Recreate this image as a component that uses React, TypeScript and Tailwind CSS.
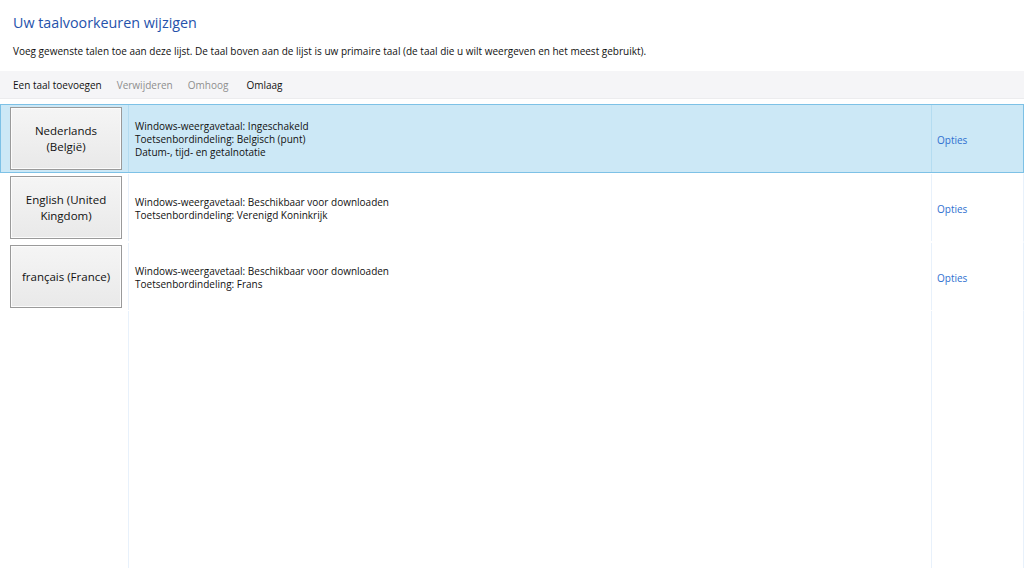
import React from "react";

const font = { fontFamily: '"Open Sans", "Noto Sans", sans-serif' };

type Lang = { name: string[]; lines: string[]; selected?: boolean };

const langs: Lang[] = [
  {
    name: ["Nederlands", "(België)"],
    lines: [
      "Windows-weergavetaal: Ingeschakeld",
      "Toetsenbordindeling: Belgisch (punt)",
      "Datum-, tijd- en getalnotatie",
    ],
    selected: true,
  },
  {
    name: ["English (United", "Kingdom)"],
    lines: [
      "Windows-weergavetaal: Beschikbaar voor downloaden",
      "Toetsenbordindeling: Verenigd Koninkrijk",
    ],
  },
  {
    name: ["français (France)"],
    lines: [
      "Windows-weergavetaal: Beschikbaar voor downloaden",
      "Toetsenbordindeling: Frans",
    ],
  },
];

function Row({ lang }: { lang: Lang }) {
  const sel = lang.selected;
  return (
    <div
      className={`flex h-[69px] border ${
        sel
          ? "bg-[#cce8f6] border-[#7dc1e6]"
          : "bg-white border-transparent border-r-[#e8f1fb]"
      }`}
    >
      <div className="w-[127px] shrink-0 pl-[9px] pt-[2px]">
        <div className="w-[112px] h-[63px] pt-[1px] border border-[#9a9a9a] bg-gradient-to-b from-[#f5f5f5] to-[#e9e9e9] flex flex-col items-center justify-center text-[11.5px] leading-[16px] text-[#111] shadow-[inset_0_0_0_1px_#fcfcfc]">
          {lang.name.map((n) => (
            <span key={n}>{n}</span>
          ))}
        </div>
      </div>
      <div
        className={`w-px shrink-0 ${sel ? "bg-[#b4dcf1]" : "bg-[#e8f1fb]"}`}
      />
      <div className="flex-1 pl-[6px] pt-[2px] text-[10px] leading-[13px] text-[#111] flex flex-col justify-center">
        {lang.lines.map((l) => (
          <span key={l}>{l}</span>
        ))}
      </div>
      <div
        className={`w-px shrink-0 ${sel ? "bg-[#b4dcf1]" : "bg-[#e8f1fb]"}`}
      />
      <div className="w-[91px] shrink-0 pl-[5px] pt-[3px] flex items-center text-[10px] leading-[13px] text-[#2f6fd0]">
        Opties
      </div>
    </div>
  );
}

export default function App() {
  return (
    <div className="w-[1024px] h-[568px] bg-white overflow-hidden flex flex-col" style={font}>
      <div className="pl-[13px] pt-[14px] h-[40px] text-[14.3px] leading-[18px] text-[#2552ab]">
        Uw taalvoorkeuren wijzigen
      </div>
      <div className="pl-[13px] h-[31px] pt-[4px] text-[10px] leading-[14px] text-[#111]">
        Voeg gewenste talen toe aan deze lijst. De taal boven aan de lijst is uw primaire taal (de taal die u wilt weergeven en het meest gebruikt).
      </div>
      <div className="h-[28px] pt-[2px] bg-[#f5f5f7] border-b border-[#ececee] flex items-center pl-[13px] gap-[15px] text-[10px] leading-[13px]">
        <span className="text-[#111]">Een taal toevoegen</span>
        <span className="text-[#8e8e8e]">Verwijderen</span>
        <span className="text-[#8e8e8e]">Omhoog</span>
        <span className="text-[#111] ml-[3px]">Omlaag</span>
      </div>
      <div className="h-[5px]" />
      <div className="flex-1 flex flex-col">
        {langs.map((l) => (
          <Row key={l.name.join()} lang={l} />
        ))}
        <div className="flex-1 flex">
          <div className="w-[128px] shrink-0" />
          <div className="w-px shrink-0 bg-[#e8f1fb]" />
          <div className="flex-1" />
          <div className="w-px shrink-0 bg-[#e8f1fb]" />
          <div className="w-[91px] shrink-0" />
          <div className="w-px shrink-0 bg-[#e8f1fb]" />
        </div>
      </div>
    </div>
  );
}
